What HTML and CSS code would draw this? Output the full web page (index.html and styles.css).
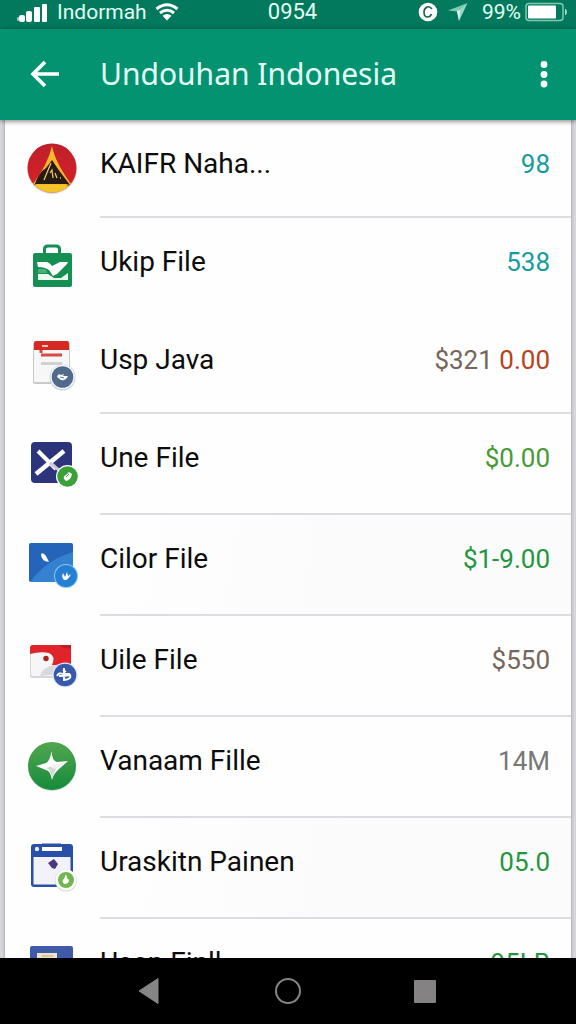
FILE: index.html
```html
<!DOCTYPE html>
<html lang="id">
<head>
<meta charset="utf-8">
<meta name="viewport" content="width=device-width, initial-scale=1">
<title>Undouhan Indonesia</title>
<link rel="stylesheet" href="styles.css">
</head>
<body>
<div class="status-bar">
  <div class="status-group">
    <svg class="signal" width="32" height="20" viewBox="0 0 32 20" aria-hidden="true"><g fill="#fff"><rect x="0" y="15" width="2" height="4" rx="1" opacity=".6"/><rect x="2" y="13" width="6" height="7" rx="2"/><rect x="9" y="9" width="6" height="11" rx="2"/><rect x="17" y="5" width="6" height="15" rx="1"/><rect x="25" y="2" width="5" height="18" rx="1"/></g></svg>
    <span>Indormah</span>
    <svg width="24" height="18" viewBox="0 0 24 18" aria-hidden="true"><path d="M1.500 6Q12-2.500 22.500 6M5 10Q12 4.500 19 10" fill="none" stroke="#fff" stroke-width="3"/><path d="M12 17.500L7.500 12.700Q12 9.500 16.500 12.700Z" fill="#fff"/></svg>
  </div>
  <span class="clock">0954</span>
  <div class="status-group status-end">
    <svg width="20" height="20" viewBox="0 0 20 20" aria-hidden="true"><circle cx="10" cy="10" r="9.300" fill="#fff"/><path d="M14 7Q12 4 9 5Q6 6.500 6 10Q6 15 9.500 15Q12.500 15 13.500 12" fill="none" stroke="#1c6350" stroke-width="1.600"/></svg>
    <svg width="20" height="20" viewBox="0 0 20 20" aria-hidden="true"><path d="M0 8.500L19.500 1L9 9.500Z" fill="#80c9b1"/><path d="M19.500 1L11 19L9 9.500Z" fill="#9ad9c5"/><path d="M9 8.500h3L11 19Z" fill="#e2fff4"/></svg>
    <span class="charge">99%</span>
    <svg width="43" height="20" viewBox="0 0 43 20" aria-hidden="true"><rect x="1" y="1.500" width="37" height="17" rx="3" fill="none" stroke="#80c9b1" stroke-width="1.500"/><rect x="3" y="3.500" width="28" height="13" rx="1" fill="#fff"/><path d="M40.500 7q2 3 0 6Z" stroke="#a5ddca" fill="#a5ddca"/></svg>
  </div>
</div>
<header class="app-bar">
  <button class="icon-button" type="button" aria-label="Kembali"><svg width="30" height="28" viewBox="0 0 30 28"><path d="M15 2L3 14L15 26M4 14H29" fill="none" stroke="#fff" stroke-width="3.600"/></svg></button>
  <h1>Undouhan Indonesia</h1>
  <button class="icon-button menu-button" type="button" aria-label="Menu"><svg width="8" height="28" viewBox="0 0 8 28"><g fill="#fff"><circle cx="4" cy="4.500" r="3.400"/><circle cx="4" cy="14.500" r="3.400"/><circle cx="4" cy="24" r="3.400"/></g></svg></button>
</header>
<main class="content">
  <ul class="file-list">
    <li class="row compact">
      <svg class="file-icon" viewBox="0 0 56 56" aria-hidden="true"><defs><clipPath id="disc"><circle cx="28" cy="28" r="24.500"/></clipPath><linearGradient id="red" x2="0" y2="1"><stop stop-color="#ba202a"/><stop offset="1" stop-color="#df2027"/></linearGradient></defs><circle cx="28" cy="29" r="25" fill="#0002"/><g clip-path="url(#disc)"><rect width="56" height="56" fill="url(#red)"/><path d="M28 6Q31 22 47 44L38 47H17L9 44Q24 24 28 6Z" fill="#fbb62b"/><path d="M28 20L34 29L46 45L42 44H14L10 46Q15 32 22 28Z" fill="#261c12"/><path d="M10 45Q13 43 18 45H40L46 46L43 56H12Z" fill="#f4c42b"/><path d="M27 23L20 40M26 33l2-3 1 8M31 33l2 5M36 38h1" stroke="#e9bf71" stroke-width="1.300" fill="none"/></g></svg>
      <span class="name">KAIFR Naha...</span><span class="value teal">98</span>
    </li>
    <li class="row compact no-line">
      <svg class="file-icon" viewBox="0 0 56 56" aria-hidden="true"><path d="M20.500 17V11Q20.500 8 24 8H32Q35.500 8 35.500 11V17" fill="none" stroke="#159052" stroke-width="3"/><rect x="9" y="15" width="39" height="34" rx="2" fill="#159052"/><path d="M13 24H22Q25 24 28 28L36 24H44L43 26L33 36L29 38L25 32Q21 29 14 29Z" fill="#fff"/><path d="M14 36H24L30 40H37L44 35V42H14Z" fill="#eefaf1"/><path d="M14 32h8M14 34h9" stroke="#82cba2"/></svg>
      <span class="name">Ukip File</span><span class="value teal">538</span>
    </li>
    <li class="row compact">
      <svg class="file-icon" viewBox="0 0 56 56" aria-hidden="true"><rect x="9" y="6" width="37" height="42" rx="2" fill="#c9c9cb"/><rect x="10" y="6" width="35" height="40" rx="1" fill="#f8f7f8"/><path d="M10 14V7Q10 5 12 5H43Q45 5 45 7V14Z" fill="#d62923"/><path d="M18 10h6" stroke="#ffc6ba" stroke-width="2"/><path d="M17 14V17M17 19H38" stroke="#d64b44" stroke-width="3"/><path d="M17 27.500H38" stroke="#d4cfd1" stroke-width="3"/><circle cx="38.500" cy="41.500" r="13" fill="#c8d5e0"/><circle cx="38.500" cy="41" r="12" fill="#fff"/><circle cx="38.500" cy="41" r="10.800" fill="#526b8b"/><path d="M33 41Q34 37 37 39L40 38L39 40L44 40Q42 45 37 44Z" fill="#f7fcff"/><path d="M36 41l4 1" stroke="#637d9a"/></svg>
      <span class="name">Usp Java</span><span class="value brown">$321 <span class="rust">0.00</span></span>
    </li>
    <li class="row">
      <svg class="file-icon" viewBox="0 0 56 56" aria-hidden="true"><rect x="7" y="8" width="41" height="41" rx="4" fill="#2c347c"/><path d="M14 17L32 35" stroke="#fff" stroke-width="4"/><path d="M40 17L12 40" stroke="#fff" stroke-width="4.500"/><path d="M26 29L36 37" stroke="#c9c5dc" stroke-width="3"/><circle cx="43.500" cy="42.500" r="11.500" fill="#fff"/><circle cx="43.500" cy="42.500" r="10.300" fill="#3ca039"/><path d="M40 45Q39 42 42 41L45 38L48 40Q47 46 42 47Z" fill="#fff"/><path d="M42 43L45 40" stroke="#3ca039"/></svg>
      <span class="name">Une File</span><span class="value lime">$0.00</span>
    </li>
    <li class="row shaded">
      <svg class="file-icon" viewBox="0 0 56 56" aria-hidden="true"><rect x="5" y="8" width="44" height="39" rx="2" fill="#2464b9"/><path d="M7 46Q22 25 49 17V47H7Z" fill="#3481d0"/><path d="M17 19Q19 17 22 21L25 27Q17 26 17 19Z" fill="#fff"/><circle cx="42" cy="41" r="12" fill="#8ac7f5"/><circle cx="42" cy="41" r="11" fill="#2580d3"/><path d="M39 38Q37 42 40 45Q44 46 47 39L44 41L43 37L41 42Z" fill="#fff"/></svg>
      <span class="name">Cilor File</span><span class="value green">$1-9.00</span>
    </li>
    <li class="row">
      <svg class="file-icon" viewBox="0 0 56 56" aria-hidden="true"><rect x="6" y="10" width="41" height="32" rx="2" fill="#d7d7db"/><rect x="7" y="10" width="39" height="30" rx="2" fill="#f7f6f7"/><path d="M6 18V12Q6 9 9 9H43Q47 9 47 13V30L28 29Q32 20 25 17Q17 15 6 18Z" fill="#df2529"/><path d="M35 9Q42 14 47 12V9Z" fill="#bb1d28"/><path d="M16 40Q18 31 31 29L39 28L43 37Z" fill="#d9d9dd"/><circle cx="22" cy="22.500" r="2.700" fill="#ad2022"/><circle cx="41" cy="39" r="12.500" fill="#dceaff"/><circle cx="41" cy="39" r="11.300" fill="#3858ad"/><path d="M33 40Q35 36 39 38H46M40 32V44Q48 43 46 39Q42 40 35 40M39 34l3 2" fill="none" stroke="#fff" stroke-width="1.900"/></svg>
      <span class="name">Uile File</span><span class="value brown">$550</span>
    </li>
    <li class="row">
      <svg class="file-icon" viewBox="0 0 56 56" aria-hidden="true"><defs><linearGradient id="leaf" x2="0" y2="1"><stop stop-color="#52a650"/><stop offset="1" stop-color="#168b3c"/></linearGradient></defs><circle cx="28" cy="30" r="24" fill="#0b632b33"/><circle cx="28" cy="29" r="24" fill="url(#leaf)"/><path d="M27.500 14Q28 24 33 25L44 24L35 32Q30 36 28 43Q26 33 22 33L12 29L22 26Q26 24 27.500 14Z" fill="#fff"/><path d="M22 31L43 25L33 30Q30 35 28 42Q27 32 22 31Z" fill="#d5d9d6"/><path d="M24 29L42 25L31 32Z" fill="#f1f3f1"/></svg>
      <span class="name">Vanaam Fille</span><span class="value gray">14M</span>
    </li>
    <li class="row shaded">
      <svg class="file-icon" viewBox="0 0 56 56" aria-hidden="true"><rect x="7" y="6" width="42" height="43" rx="3" fill="#2850a9"/><rect x="9.500" y="19" width="37" height="27.500" fill="#f2f3f9"/><path d="M18 9H38V13H18Z" fill="#fff"/><path d="M18 7H37" stroke="#2850a9" stroke-width="3"/><circle cx="13" cy="11" r="2.200" fill="#e5edff"/><path d="M24 25L30 21L34 26L31 31L28 30Z" fill="#4b3780"/><circle cx="42" cy="42.500" r="11" fill="#c7dfbf"/><circle cx="42" cy="42" r="10.500" fill="#fff"/><circle cx="42" cy="42" r="8" fill="#73b651"/><path d="M40 46Q37 42 40 41L42 36L43 40L45 42Q45 46 40 46Z" fill="#fff"/></svg>
      <span class="name">Uraskitn Painen</span><span class="value green">05.0</span>
    </li>
    <li class="row">
      <svg class="file-icon" viewBox="0 0 56 56" aria-hidden="true"><rect x="6" y="7" width="43" height="42" rx="2" fill="#405aaa"/><rect x="13" y="14" width="20" height="16" fill="#eee3c9"/><path d="M18 17h11" stroke="#c9a765"/></svg>
      <span class="name">Usan Finll</span><span class="value green">95LB</span>
    </li>
  </ul>
</main>
<nav class="system-nav" aria-label="Navigasi sistem">
  <button class="icon-button" type="button" aria-label="Kembali"><svg width="28" height="28" viewBox="0 0 28 28"><path d="M3 14L22 1.500V26.500Z" fill="#858585" stroke="#858585" stroke-linejoin="round"/></svg></button>
  <button class="icon-button" type="button" aria-label="Beranda"><svg width="28" height="28" viewBox="0 0 28 28"><circle cx="14" cy="14" r="12" fill="none" stroke="#858585" stroke-width="2"/></svg></button>
  <button class="icon-button" type="button" aria-label="Terkini"><svg width="28" height="28" viewBox="0 0 28 28"><rect x="2" y="3" width="22" height="23" rx="1" fill="#858283"/></svg></button>
</nav>
</body>
</html>
```

FILE: styles.css
```css
* {
  box-sizing: border-box;
}

body {
  display: flex;
  flex-direction: column;
  height: 100vh;
  margin: 0;
  overflow: hidden;
  background: #d5d7da;
  color: #0c0c0c;
  font-family: Roboto, sans-serif;
}

svg {
  display: block;
  flex: none;
}

.status-bar {
  display: grid;
  grid-template-columns: 1fr auto 1fr;
  align-items: start;
  height: 29px;
  padding: 0 8px 0 17px;
  background: #02795c;
  color: #e2fff5;
  font-size: 22px;
  line-height: 24px;
}

.status-group {
  display: flex;
  align-items: center;
  gap: 8px;
}

.signal + span {
  font-size: 21px;
}

.status-end {
  justify-content: flex-end;
  gap: 10px;
}

.charge {
  margin: 0 -6px 0 4px;
  font-size: 21px;
}

.app-bar {
  position: relative;
  z-index: 1;
  display: flex;
  align-items: center;
  height: 91px;
  padding: 0 28px 2px 30px;
  background: #049370;
  box-shadow: 0 1px 5px #0008;
}

.app-bar h1 {
  flex: 1;
  margin: 0 0 0 40px;
  color: #e6fff7;
  font-family: "Noto Sans", sans-serif;
  font-size: 30px;
  font-weight: 400;
  line-height: 40px;
}

.icon-button {
  display: flex;
  padding: 0;
  border: 0;
  background: none;
}

.content {
  flex: 1;
  min-height: 0;
  overflow: hidden;
  padding: 0 5px;
  background: #d5d7da;
}

.file-list {
  margin: 0;
  padding: 0;
  background: #fefefe;
  box-shadow: 0 0 3px #0005;
  list-style: none;
}

.row {
  display: grid;
  grid-template-columns: 76px 1fr auto;
  height: 101px;
  padding: 28px 21px 0 19px;
  font-size: 28px;
  line-height: 32px;
  background: linear-gradient(#dcdde0, #dcdde0) 95px 100% / 100% 2px no-repeat;
}

.compact {
  height: 98px;
}

.no-line {
  background: none;
}

.shaded {
  background:
    linear-gradient(#dcdde0, #dcdde0) 95px 100% / 100% 2px no-repeat,
    linear-gradient(100deg, #fefefe 20%, #fbfbfb 60%);
}

.file-icon {
  width: 56px;
  height: 56px;
  margin-top: -8px;
}

.name {
  white-space: nowrap;
}

.value {
  font-size: 26px;
  white-space: nowrap;
}

.teal {
  color: #169c9b;
}

.brown {
  color: #75655a;
}

.rust {
  color: #b7421c;
}

.lime {
  color: #469b35;
}

.green {
  color: #24963f;
}

.gray {
  color: #777;
}

.system-nav {
  display: flex;
  justify-content: center;
  align-items: center;
  gap: 110px;
  height: 66px;
  background: #000;
}
```
